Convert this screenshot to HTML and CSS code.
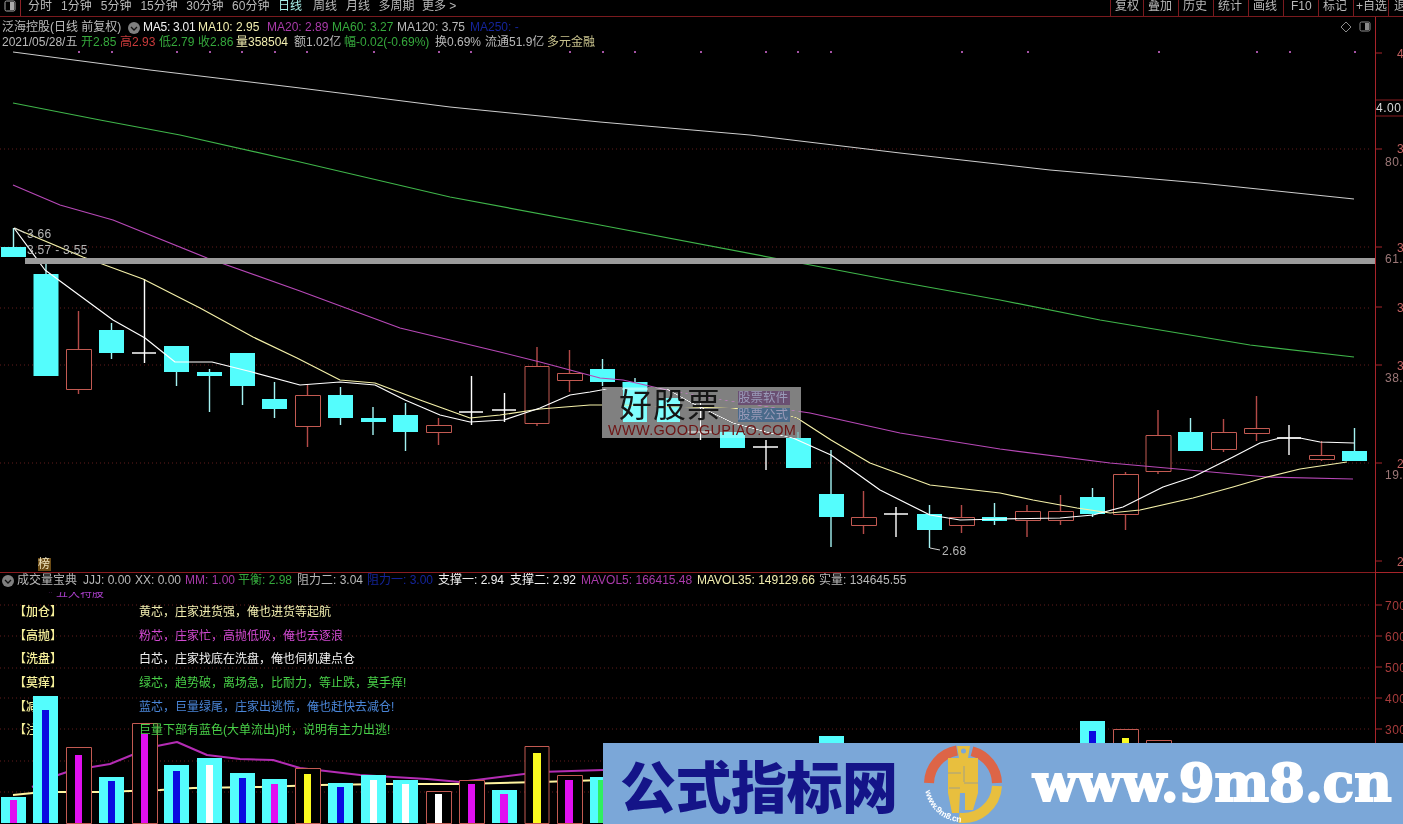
FILE: index.html
```html
<!DOCTYPE html>
<html lang="zh">
<head>
<meta charset="utf-8">
<title>成交量宝典</title>
<link rel="stylesheet" href="styles.css">
</head>
<body>
<div class="screen">
  <header class="toolbar">
    <div class="panel-toggle">
      <svg class="panel-icon" viewBox="0 0 12 12"><rect x="1" y="1" width="10" height="10" rx="1.5" fill="none" stroke="#aaa"/><rect x="6" y="2" width="4" height="8" fill="#aaa"/></svg>
    </div>
    <nav class="periods">
      <span>分时</span><span>1分钟</span><span>5分钟</span><span>15分钟</span><span>30分钟</span><span>60分钟</span>
      <span class="active">日线</span><span>周线</span><span class="month">月线</span><span>多周期</span><span class="more">更多 &gt;</span>
    </nav>
    <nav class="tools">
      <span class="tool first">复权</span><span class="tool">叠加</span><span class="tool">历史</span><span class="tool">统计</span><span class="tool">画线</span><span class="tool f10">F10</span><span class="tool">标记</span><span class="tool plus">+自选</span><span class="tool last">退出</span>
    </nav>
  </header>

  <div class="workspace">
    <div class="panes">
      <section class="pane price">
        <svg class="canvas" viewBox="0 17 1375 555" width="1375" height="555">
          <g class="grid">
            <path d="M0 149H1372M0 247H1372M0 308H1372M0 365H1372M0 463H1372"/>
          </g>
          <path class="signal-dots" d="M78 52h2M111 52h2M176 52h2M209 52h2M241 52h2M274 52h2M306 52h2M373 52h2M438 52h2M470 52h2M569 52h2M602 52h2M634 52h2M700 52h2M765 52h2M797 52h2M830 52h2M961 52h2M1027 52h2M1158 52h2M1256 52h2M1289 52h2M1354 52h2"/>

          <path class="wick-red" d="M78.5 311V349M78.5 390V394M307.5 384V395M307.5 426V447M438.5 418V425M438.5 432V445M537 347V366M537 423V426M569.5 350V373M569.5 380V392M863.5 491V517M863.5 525V534M961.5 505V517M961.5 525V533M1027 505V511M1027 520V537M1060.5 495V511M1060.5 520V525M1125.5 472V474M1125.5 514V530M1158 410V435M1158 471V474M1223.5 419V432M1223.5 449V452M1256.5 396V428M1256.5 433V441M1321.5 441V455M1321.5 459V461"/>
          <path class="wick-cyan" d="M13.5 228V247M46 262V274M111.5 323V330M111.5 353V359M176.5 372V386M209.5 369V372M209.5 376V412M242.5 386V405M274.5 382V399M274.5 409V418M340.5 387V395M340.5 418V425M373 407V418M373 422V435M405.5 403V415M405.5 432V451M602.5 359V369M602.5 382V386M635 378V382M798 432V438M831 450V494M831 517V547M929.5 505V514M929.5 530V548M994.5 503V517M994.5 521V525M1092.5 488V497M1092.5 514V517M1190.5 418V432M1354.5 428V451"/>
          <path class="body-cyan" d="M1 247h25v10h-25zM33.500 274h25v102h-25zM99 330h25v23h-25zM164 346h25v26h-25zM197 372h25v4h-25zM230 353h25v33h-25zM262 399h25v10h-25zM328 395h25v23h-25zM361 418h25v4h-25zM393 415h25v17h-25zM590 369h25v13h-25zM622.500 382h25v40h-25zM657 398h23v24h-23zM720 432h25v16h-25zM786 438h25v30h-25zM819 494h25v23h-25zM917 514h25v16h-25zM982 517h25v4h-25zM1080 497h25v17h-25zM1178 432h25v19h-25zM1342 451h25v10h-25z"/>
          <path class="body-red" d="M66.500 349.500h25v40h-25zM295.500 395.500h25v31h-25zM426.500 425.500h25v7h-25zM525 366.500h24v57h-24zM557.500 373.500h25v7h-25zM851.500 517.500h25v8h-25zM949.500 517.500h25v8h-25zM1015.500 511.500h25v9h-25zM1048.500 511.500h25v9h-25zM1113.500 474.500h25v40h-25zM1146 435.500h25v36h-25zM1211.500 432.500h25v17h-25zM1244.500 428.500h25v5h-25zM1309.500 455.500h25v4h-25z"/>
          <path class="cross" d="M144.500 279V363M132 353H156M471.500 376V425M459 412H483M504.500 393V422M492 410H516M700.500 400V440M688 432H712M766 440V470M753 447H778M896 507V537M884 514H908M1289 425V455M1277 438H1301"/>

          <polyline class="ma ma120" points="13,52 150,70 300,88 450,107 600,122 750,135 900,153 1050,170 1200,183 1354,199"/>
          <polyline class="ma ma60" points="13,103 100,120 180,135 300,162 450,197 600,225 800,263 900,282 1000,300 1100,320 1250,345 1354,357"/>
          <polyline class="ma ma20" points="13,185 60,205 113,220 207,258 300,291 400,328 500,352 540,362 600,378 623,380 667,390 723,400 810,413 900,433 1000,449 1110,463 1200,471 1267,477 1353,479"/>
          <polyline class="ma ma10" points="14,228 83,257 143,279 200,308 253,337 297,358 340,380 375,383 420,400 470,418 500,415 540,409 590,405 623,405 683,407 730,408 777,412 797,418 831,440 870,463 930,485 1000,493 1033,500 1077,508 1110,513 1140,510 1193,498 1233,487 1267,477 1300,469 1347,462"/>
          <polyline class="ma ma5" points="14,228 45,270 113,320 145,338 175,362 212,362 252,372 300,385 340,382 375,385 405,400 440,415 470,422 504,420 540,408 570,395 590,392 607,389 667,389 690,402 733,423 770,433 793,438 831,455 880,490 930,515 960,520 1000,519 1060,518 1093,515 1123,507 1163,487 1193,477 1233,457 1260,443 1280,438 1300,438 1320,442 1354,443"/>

          <path class="note-line" d="M15 228L25 233M930 548L940 550"/>
          <text class="note" x="27" y="238">3.66</text>
          <text class="note" x="27" y="254">3.57 - 3.55</text>
          <text class="note" x="942" y="555">2.68</text>
          <rect class="support-band" x="25" y="258" width="1350" height="6"/>
          <path class="corner-icon" d="M1346 22l5 5-5 5-5-5z"/>
          <rect class="corner-box" x="1360" y="22" width="10" height="9" rx="1.500"/>
          <rect class="corner-fill" x="1365" y="23" width="4" height="7"/>
        </svg>

        <div class="legend legend-ma">
          <span class="title">泛海控股(日线 前复权)</span>
          <svg class="chev" viewBox="0 0 12 12"><circle cx="6" cy="6" r="6" fill="#808080"/><path d="M3 5l3 3 3-3" fill="none" stroke="#111" stroke-width="1.300"/></svg>
          <span class="c-white tight">MA5: 3.01</span>
          <span class="c-cream">MA10: 2.95</span>
          <span class="c-magenta">MA20: 2.89</span>
          <span class="c-green">MA60: 3.27</span>
          <span class="c-grey">MA120: 3.75</span>
          <span class="c-navy">MA250: -</span>
        </div>
        <div class="legend legend-quote">
          <span class="c-grey">2021/05/28/五</span>
          <span class="c-green">开2.85</span>
          <span class="c-red">高2.93</span>
          <span class="c-green">低2.79</span>
          <span class="c-green">收2.86</span>
          <span class="c-cream">量358504</span>
          <span class="c-grey">额1.02亿</span>
          <span class="c-green">幅-0.02(-0.69%)</span>
          <span class="c-grey">换0.69%</span>
          <span class="c-grey">流通51.9亿</span>
          <span class="c-beige">多元金融</span>
        </div>

        <div class="watermark">
          <div class="wm-shade"></div>
          <div class="wm-main">好股票</div>
          <div class="wm-tags"><span class="wm-tag soft">股票软件</span><span class="wm-tag formula">股票公式</span></div>
          <div class="wm-url">WWW.GOODGUPIAO.COM</div>
        </div>
        <span class="rank-tag">榜</span>
      </section>

      <section class="pane vol">
        <svg class="canvas" viewBox="0 573 1375 251" width="1375" height="251">
          <path class="grid-line" d="M0 605H1372M0 636H1372M0 668H1372M0 698H1372M0 729H1372M0 761H1372M0 792H1372"/>
          <polyline class="vol-ma cream" points="13,795 33,793 58,792 100,792 160,790 193,788 260,787 320,785 387,784 460,784 540,782 603,780"/>
          <polyline class="vol-ma magenta" points="32,787 58,775 67,772 92,767 110,764 132,755 157,746 177,742 207,755 240,759 273,760 300,768 360,775 427,779 460,782 540,772 603,770"/>
          <path class="vol-hollow" d="M66.500 747.500h25v76h-25zM132.500 723.500h25v100h-25zM295.500 768.500h25v55h-25zM426.500 791.500h25v32h-25zM459.500 780.500h25v43h-25zM525 746.500h24v77h-24zM557.500 775.500h25v48h-25zM1113.500 729.500h25v94h-25zM1146.500 740.500h25v83h-25z"/>
          <path class="core magenta" d="M75 755h7v68h-7zM141 734h7v89h-7zM468 784h7v39h-7zM565 780h8v43h-8z"/>
          <path class="core yellow" d="M304 774h7v49h-7zM533 753h8v70h-8zM1122 738h7v85h-7z"/>
          <path class="core white" d="M435 794h7v29h-7z"/>
        </svg>
        <div class="legend legend-vol">
          <svg class="chev" viewBox="0 0 12 12"><circle cx="6" cy="6" r="6" fill="#808080"/><path d="M3 5l3 3 3-3" fill="none" stroke="#111" stroke-width="1.300"/></svg>
          <span class="c-grey">成交量宝典</span>
          <span class="c-grey">JJJ: 0.00</span>
          <span class="c-grey">XX: 0.00</span>
          <span class="c-magenta">MM: 1.00</span>
          <span class="c-green">平衡: 2.98</span>
          <span class="c-grey">阻力二: 3.04</span>
          <span class="c-navy">阻力一: 3.00</span>
          <span class="c-white">支撑一: 2.94</span>
          <span class="c-white">支撑二: 2.92</span>
          <span class="c-magenta">MAVOL5: 166415.48</span>
          <span class="c-cream">MAVOL35: 149129.66</span>
          <span class="c-grey">实量: 134645.55</span>
        </div>
        <div class="clipped"><span>* 五天特股</span></div>
        <div class="rows">
          <div class="row"><span class="tag">【加仓】</span><span class="c-cream">黄芯，庄家进货强，俺也进货等起航</span></div>
          <div class="row"><span class="tag">【高抛】</span><span class="c-pink">粉芯，庄家忙，高抛低吸，俺也去逐浪</span></div>
          <div class="row"><span class="tag">【洗盘】</span><span class="c-white">白芯，庄家找底在洗盘，俺也伺机建点仓</span></div>
          <div class="row"><span class="tag">【莫痒】</span><span class="c-lime">绿芯，趋势破，离场急，比耐力，等止跌，莫手痒!</span></div>
          <div class="row"><span class="tag">【减仓】</span><span class="c-blue">蓝芯，巨量绿尾，庄家出逃慌，俺也赶快去减仓!</span></div>
          <div class="row"><span class="tag">【注意】</span><span class="c-lime">巨量下部有蓝色(大单流出)时，说明有主力出逃!</span></div>
        </div>
        <svg class="canvas front" viewBox="0 573 1375 251" width="1375" height="251">
          <path class="vol-cyan" d="M1 797h25v26h-25zM33 696h25v127h-25zM99 777h25v46h-25zM164 765h25v58h-25zM197 758h25v65h-25zM230 773h25v50h-25zM262 779h25v44h-25zM328 783h25v40h-25zM361 775h25v48h-25zM393 780h25v43h-25zM492 790h25v33h-25zM590 777h14v46h-14zM819 736h25v20h-25zM1080 721h25v30h-25z"/>
          <path class="core magenta" d="M10 800h7v23h-7zM271 784h7v39h-7zM500 794h8v29h-8z"/>
          <path class="core blue" d="M42 710h7v113h-7zM108 781h7v42h-7zM173 771h7v52h-7zM239 778h7v45h-7zM337 787h7v36h-7zM1089 731h7v20h-7z"/>
          <path class="core white" d="M206 765h7v58h-7zM370 780h7v43h-7zM402 784h7v39h-7z"/>
          <path class="core lime" d="M598 780h6v43h-6z"/>
        </svg>
      </section>
    </div>

    <svg class="axis" viewBox="1375 17 28 807" width="28" height="807">
      <path class="axis-line" d="M1375.500 17V824M1375 572.500H1403"/>
      <path class="axis-tick" d="M1376 53h6M1376 149h6M1376 247h6M1376 307h6M1376 365h6M1376 463h6M1376 561h6M1376 605h6M1376 636h6M1376 667h6M1376 698h6M1376 729h6"/>
      <path class="axis-box" d="M1376 100H1403M1376 116H1403"/>
      <text class="tick" x="1397" y="58">4</text>
      <text class="tick strong" x="1376" y="112">4.00</text>
      <text class="tick" x="1397" y="153">3</text>
      <text class="tick dim" x="1385" y="166">80.</text>
      <text class="tick" x="1397" y="252">3</text>
      <text class="tick dim" x="1385" y="263">61.</text>
      <text class="tick" x="1397" y="312">3</text>
      <text class="tick" x="1397" y="370">3</text>
      <text class="tick dim" x="1385" y="382">38.</text>
      <text class="tick" x="1397" y="468">2</text>
      <text class="tick dim" x="1385" y="479">19.</text>
      <text class="tick" x="1397" y="566">2</text>
      <text class="tick red" x="1385" y="610">700</text>
      <text class="tick red" x="1385" y="641">600</text>
      <text class="tick red" x="1385" y="672">500</text>
      <text class="tick red" x="1385" y="703">400</text>
      <text class="tick red" x="1385" y="734">300</text>
    </svg>
  </div>

  <aside class="banner">
    <span class="banner-cn">公式指标网</span>
    <svg class="banner-logo" viewBox="0 0 84 84">
      <defs><path id="logo-arc" d="M4 46A38 38 0 0 0 38 80"/></defs>
      <path class="logo-red" d="M8 41A34 34 0 0 1 36 8.500M51 9.200A34 34 0 0 1 76 41"/>
      <path class="logo-gold" d="M76 44A34 34 0 0 1 38 75.800"/>
      <path class="logo-figure" d="M36 4H49L47 16H57V51L52 68H44V51H39L38 71H31L27 51V16H38Z"/>
      <circle class="logo-hole" cx="42.500" cy="9" r="2.500"/>
      <path class="logo-cut" d="M27 31H40M43 24V40M43 41H57M28 46H39"/>
      <text class="logo-text"><textPath href="#logo-arc" startOffset="3">www.9m8.cn</textPath></text>
    </svg>
    <span class="banner-url">www.9m8.cn</span>
  </aside>
</div>
</body>
</html>
```

FILE: styles.css
```css
* { box-sizing: border-box; }
html, body { margin: 0; padding: 0; background: #000; }
body { font: 12px/15px "Liberation Sans", "Noto Sans CJK SC", sans-serif; color: #bdbdbd; }
.screen { position: relative; width: 1403px; height: 824px; overflow: hidden; background: #000; }

.toolbar { display: flex; height: 17px; border-bottom: 1px solid #7a1a1e; line-height: 13px; color: #b9b9b9; }
.panel-toggle { width: 21px; border-right: 1px solid #8c2226; padding: 0 4px; }
.panel-icon { display: block; width: 12px; height: 12px; }
.periods { display: flex; gap: 9px; padding-left: 7px; }
.periods span:nth-child(n+4):nth-child(-n+6) { margin-right: -.5px; }
.periods .active { color: #a8f0e8; margin-right: 2px; }
.periods .month { margin-right: -.5px; }
.periods .more { margin-left: -1.500px; }
.tools { display: flex; margin-left: auto; }
.tool { width: 35px; border-left: 1px solid #7a1a1e; padding-left: 4px; white-space: nowrap; overflow: hidden; }
.tool.first { width: 33px; }
.tool.f10 { padding-left: 7px; }
.tool.plus { padding-left: 2px; }
.tool.last { width: 15px; padding-left: 5px; }

.workspace { display: flex; height: 807px; }
.panes { width: 1375px; display: flex; flex-direction: column; }
.pane { position: relative; overflow: hidden; }
.pane.price { height: 555px; padding-top: 3px; }
.pane.vol { height: 252px; border-top: 1px solid #8a1c20; }
.canvas { position: absolute; left: 0; top: 0; display: block; }
.canvas.front { pointer-events: none; z-index: 2; }

.grid path, .grid-line { fill: none; stroke: #621c1c; stroke-width: 1; stroke-dasharray: 1 3; }
.signal-dots { fill: none; stroke: #a552a5; stroke-width: 2; }
.wick-red { fill: none; stroke: #b44a48; stroke-width: 1.4; }
.wick-cyan { fill: none; stroke: #a4f2f2; stroke-width: 1.4; }
.body-cyan, .vol-cyan { fill: #54fdfd; }
.body-red { fill: #000; stroke: #c25a52; stroke-width: 1; }
.cross { fill: none; stroke: #fff; stroke-width: 1.4; }
.ma { fill: none; stroke-width: 1.2; stroke-linejoin: round; }
.ma120 { stroke: #cfcfcf; stroke-width: 1; }
.ma60 { stroke: #3fb54a; }
.ma20 { stroke: #b748b7; }
.ma10 { stroke: #f4f0a8; }
.ma5 { stroke: #fff; }
.note-line { fill: none; stroke: #cfcfcf; stroke-width: 1; }
.note { fill: #b5b5b5; font-size: 12px; letter-spacing: .3px; }
.support-band { fill: #9b9b9b; }
.corner-icon { fill: none; stroke: #8a8a8a; }
.corner-box { fill: none; stroke: #8c8c8c; }
.corner-fill { fill: #8c8c8c; }

.legend { position: relative; display: grid; height: 15px; align-items: center; white-space: nowrap; padding-left: 2px; }
.legend-ma { grid-template-columns: 126px 15px 55px 69px 65px 65px 73px auto; }
.legend-quote { grid-template-columns: 79px 39px 39px 39px 38px 58px 50px 91px 50px 62px auto; }
.legend-vol { grid-template-columns: 15px 66px 52px 50px 53px 59px 70px 71px 72px 71px 116px 122px auto; }
.chev { width: 12px; height: 12px; }
.tight { letter-spacing: -.25px; }

.c-white { color: #f2f2f2; }
.c-cream { color: #f2eeb0; }
.c-magenta { color: #a93aa9; }
.c-pink { color: #d24ad2; }
.c-green { color: #35a83c; }
.c-lime { color: #48d048; }
.c-grey { color: #b9b9b9; }
.c-navy { color: #14249a; }
.c-red { color: #c83a3a; }
.c-beige { color: #c9c38e; }
.c-blue { color: #4a86d8; }

.watermark { position: absolute; left: 602px; top: 370px; width: 199px; height: 51px; }
.wm-shade { position: absolute; inset: 0; background: #808080; mix-blend-mode: lighten; }
.wm-main { position: absolute; left: 17px; top: 0; font-size: 33px; line-height: 38px; color: #151515; letter-spacing: 1px; }
.wm-tags { position: absolute; left: 136px; top: 4px; display: flex; flex-direction: column; gap: 3px; }
.wm-tag { width: 52px; height: 14px; font-size: 12.500px; line-height: 14px; color: #9a9ab8; white-space: nowrap; }
.wm-tag.soft { background: #6a4f72; }
.wm-tag.formula { background: #4a6a8a; }
.wm-url { position: absolute; left: 6px; top: 35px; font-size: 14.500px; line-height: 16px; color: #6e1414; letter-spacing: .3px; white-space: nowrap; }

.rank-tag { position: absolute; left: 38px; top: 541px; width: 13px; height: 13px; background: #6a4a14; color: #f0e6c0; line-height: 13px; font-size: 12px; }

.clipped { position: absolute; left: 48px; top: 19px; height: 6px; overflow: hidden; color: #a83ec8; line-height: 6px; }
.clipped span { display: block; transform: translateY(-2px); }

.rows { position: relative; display: flex; flex-direction: column; margin-top: 13px; }
.row { display: flex; height: 23.600px; align-items: center; white-space: nowrap; padding-left: 14px; }
.tag { flex: none; width: 125px; color: #f6f09a; font-weight: 500; }

.vol-ma { fill: none; stroke-width: 2; stroke-linejoin: round; }
.vol-ma.cream { stroke: #fff4a0; }
.vol-ma.magenta { stroke: #b42cb4; }
.vol-hollow { fill: #000; stroke: #c25a52; stroke-width: 1; }
.core.magenta { fill: #e010f0; }
.core.yellow { fill: #fafa20; }
.core.white { fill: #fff; }
.core.blue { fill: #0a0ae0; }
.core.lime { fill: #30f060; }

.axis { display: block; flex: none; }
.axis-line { fill: none; stroke: #a8242a; stroke-width: 1; }
.axis-tick { fill: none; stroke: #a8242a; stroke-width: 1; }
.axis-box { fill: none; stroke: #8a1c20; stroke-width: 1; }
.tick { font-size: 12px; fill: #c06060; letter-spacing: .5px; }
.tick.strong { fill: #d8d8d8; }
.tick.dim { fill: #9c7878; }
.tick.red { fill: #a83c3c; }

.banner { position: absolute; left: 603px; top: 743px; width: 800px; height: 81px; background: #7ba7d8; display: flex; align-items: center; padding-left: 17px; z-index: 5; }
.banner-cn { font-family: "Noto Sans CJK SC", sans-serif; font-weight: 900; font-size: 56px; line-height: 81px; color: #141488; letter-spacing: -.5px; width: 301px; white-space: nowrap; flex: none; }
.banner-logo { width: 84px; height: 84px; flex: none; }
.banner-url { margin-left: 28px; font-family: "DejaVu Serif", serif; font-weight: 700; font-size: 51.500px; line-height: 81px; color: #fff; white-space: nowrap; -webkit-text-stroke: 2px #fff; }
.logo-red { fill: none; stroke: #dd6547; stroke-width: 10; }
.logo-gold { fill: none; stroke: #e8bf3e; stroke-width: 10; }
.logo-figure { fill: #e8bf3e; }
.logo-hole { fill: #7ba7d8; }
.logo-cut { fill: none; stroke: #a0a088; stroke-width: 1; }
.logo-text { fill: #fff; font-size: 8.500px; font-weight: 700; }
```
